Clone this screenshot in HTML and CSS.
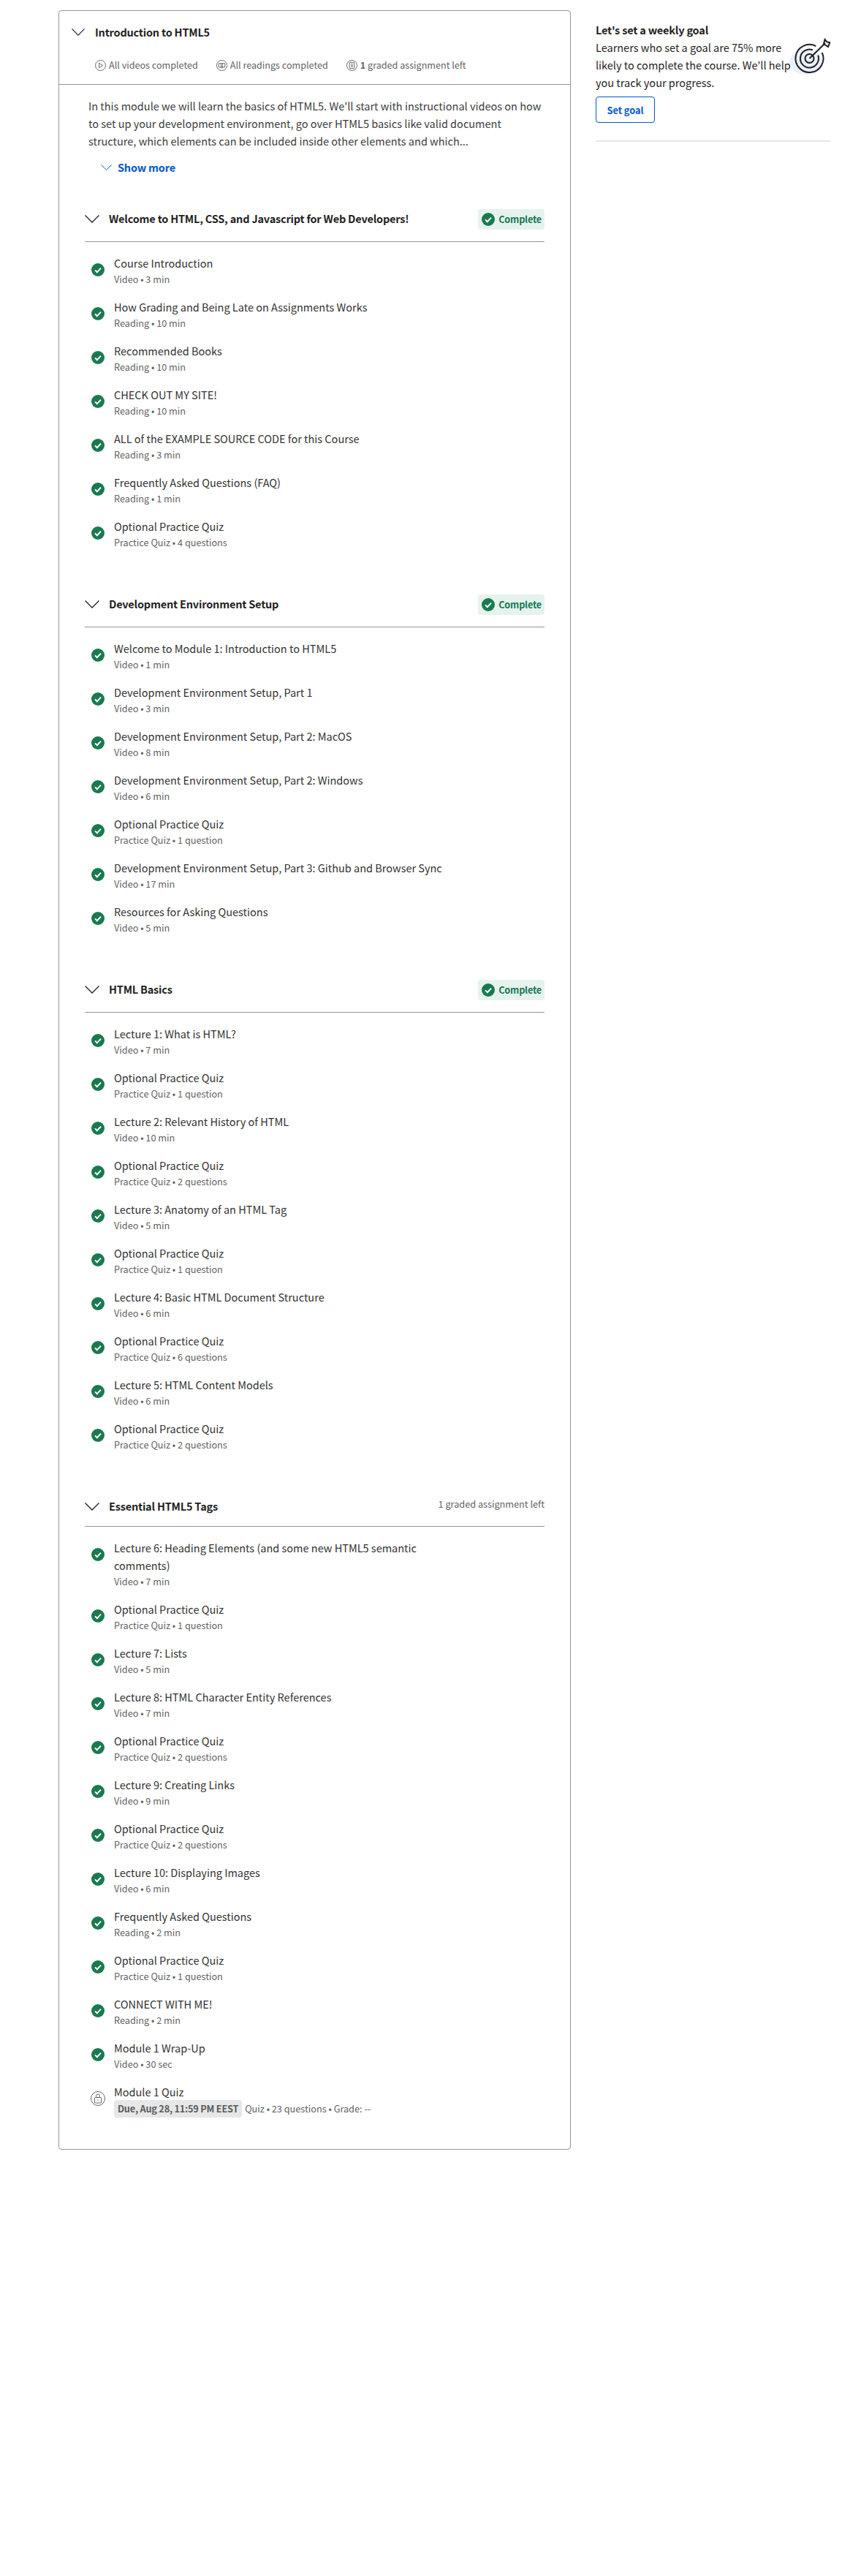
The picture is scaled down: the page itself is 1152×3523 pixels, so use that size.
FILE: index.html
```html
<!DOCTYPE html>
<html>
  <head>
    <title>Introduction to HTML5</title>
    <link rel="stylesheet" href="styles.css">
  </head>
  <body>
    <svg class="defs" width="0" height="0">
      <symbol id="done" viewBox="0 0 18 18">
        <circle cx="9" cy="9" r="9" fill="currentColor"/>
        <path d="M5 9.4l2.8 2.8L13 6.6" fill="none" stroke="#fff" stroke-width="2"/>
      </symbol>
      <symbol id="chevron" viewBox="0 0 20 11" preserveAspectRatio="none">
        <path d="M.5.5L10 10 19.5.5" fill="none" stroke="currentColor" stroke-width="1.3"/>
      </symbol>
    </svg>

    <div class="page">
      <main class="module">
        <header class="module-head">
          <div class="module-title">
            <svg class="chevron"><use href="#chevron"/></svg>
            <h1>Introduction to HTML5</h1>
          </div>
          <div class="stats">
            <span class="stat">
              <svg class="stat-icon" viewBox="0 0 16 16"><circle cx="8" cy="8" r="7.5"/><path d="M6 4.5v7l5.5-3.5z"/></svg>
              All videos completed
            </span>
            <span class="stat">
              <svg class="stat-icon" viewBox="0 0 16 16"><circle cx="8" cy="8" r="7.5"/><path d="M3.5 5h9v5.5h-9zM7 5v7M9 5v7"/></svg>
              All readings completed
            </span>
            <span class="stat">
              <svg class="stat-icon" viewBox="0 0 16 16"><circle cx="8" cy="8" r="7.5"/><path d="M4.5 3.5h7v9h-7zM6.5 6h3M6.5 8h3M6.5 10h3"/></svg>
              <span><b>1</b> graded assignment left</span>
            </span>
          </div>
        </header>

        <div class="summary">
          <p>In this module we will learn the basics of HTML5. We'll start with instructional videos on how to set up your development environment, go over HTML5 basics like valid document structure, which elements can be included inside other elements and which...</p>
          <button class="show-more">
            <svg class="chevron small"><use href="#chevron"/></svg>
            Show more
          </button>
        </div>

        <section class="lesson">
          <div class="lesson-head">
            <svg class="chevron"><use href="#chevron"/></svg>
            <h2>Welcome to HTML, CSS, and Javascript for Web Developers!</h2>
            <span class="badge"><svg class="check"><use href="#done"/></svg>Complete</span>
          </div>
          <ul class="items">
            <li class="item"><svg class="check"><use href="#done"/></svg><div><div class="item-title">Course Introduction</div><div class="item-meta">Video • 3 min</div></div></li>
            <li class="item"><svg class="check"><use href="#done"/></svg><div><div class="item-title">How Grading and Being Late on Assignments Works</div><div class="item-meta">Reading • 10 min</div></div></li>
            <li class="item"><svg class="check"><use href="#done"/></svg><div><div class="item-title">Recommended Books</div><div class="item-meta">Reading • 10 min</div></div></li>
            <li class="item"><svg class="check"><use href="#done"/></svg><div><div class="item-title">CHECK OUT MY SITE!</div><div class="item-meta">Reading • 10 min</div></div></li>
            <li class="item"><svg class="check"><use href="#done"/></svg><div><div class="item-title">ALL of the EXAMPLE SOURCE CODE for this Course</div><div class="item-meta">Reading • 3 min</div></div></li>
            <li class="item"><svg class="check"><use href="#done"/></svg><div><div class="item-title">Frequently Asked Questions (FAQ)</div><div class="item-meta">Reading • 1 min</div></div></li>
            <li class="item"><svg class="check"><use href="#done"/></svg><div><div class="item-title">Optional Practice Quiz</div><div class="item-meta">Practice Quiz • 4 questions</div></div></li>
          </ul>
        </section>

        <section class="lesson">
          <div class="lesson-head">
            <svg class="chevron"><use href="#chevron"/></svg>
            <h2>Development Environment Setup</h2>
            <span class="badge"><svg class="check"><use href="#done"/></svg>Complete</span>
          </div>
          <ul class="items">
            <li class="item"><svg class="check"><use href="#done"/></svg><div><div class="item-title">Welcome to Module 1: Introduction to HTML5</div><div class="item-meta">Video • 1 min</div></div></li>
            <li class="item"><svg class="check"><use href="#done"/></svg><div><div class="item-title">Development Environment Setup, Part 1</div><div class="item-meta">Video • 3 min</div></div></li>
            <li class="item"><svg class="check"><use href="#done"/></svg><div><div class="item-title">Development Environment Setup, Part 2: MacOS</div><div class="item-meta">Video • 8 min</div></div></li>
            <li class="item"><svg class="check"><use href="#done"/></svg><div><div class="item-title">Development Environment Setup, Part 2: Windows</div><div class="item-meta">Video • 6 min</div></div></li>
            <li class="item"><svg class="check"><use href="#done"/></svg><div><div class="item-title">Optional Practice Quiz</div><div class="item-meta">Practice Quiz • 1 question</div></div></li>
            <li class="item"><svg class="check"><use href="#done"/></svg><div><div class="item-title">Development Environment Setup, Part 3: Github and Browser Sync</div><div class="item-meta">Video • 17 min</div></div></li>
            <li class="item"><svg class="check"><use href="#done"/></svg><div><div class="item-title">Resources for Asking Questions</div><div class="item-meta">Video • 5 min</div></div></li>
          </ul>
        </section>

        <section class="lesson">
          <div class="lesson-head">
            <svg class="chevron"><use href="#chevron"/></svg>
            <h2>HTML Basics</h2>
            <span class="badge"><svg class="check"><use href="#done"/></svg>Complete</span>
          </div>
          <ul class="items">
            <li class="item"><svg class="check"><use href="#done"/></svg><div><div class="item-title">Lecture 1: What is HTML?</div><div class="item-meta">Video • 7 min</div></div></li>
            <li class="item"><svg class="check"><use href="#done"/></svg><div><div class="item-title">Optional Practice Quiz</div><div class="item-meta">Practice Quiz • 1 question</div></div></li>
            <li class="item"><svg class="check"><use href="#done"/></svg><div><div class="item-title">Lecture 2: Relevant History of HTML</div><div class="item-meta">Video • 10 min</div></div></li>
            <li class="item"><svg class="check"><use href="#done"/></svg><div><div class="item-title">Optional Practice Quiz</div><div class="item-meta">Practice Quiz • 2 questions</div></div></li>
            <li class="item"><svg class="check"><use href="#done"/></svg><div><div class="item-title">Lecture 3: Anatomy of an HTML Tag</div><div class="item-meta">Video • 5 min</div></div></li>
            <li class="item"><svg class="check"><use href="#done"/></svg><div><div class="item-title">Optional Practice Quiz</div><div class="item-meta">Practice Quiz • 1 question</div></div></li>
            <li class="item"><svg class="check"><use href="#done"/></svg><div><div class="item-title">Lecture 4: Basic HTML Document Structure</div><div class="item-meta">Video • 6 min</div></div></li>
            <li class="item"><svg class="check"><use href="#done"/></svg><div><div class="item-title">Optional Practice Quiz</div><div class="item-meta">Practice Quiz • 6 questions</div></div></li>
            <li class="item"><svg class="check"><use href="#done"/></svg><div><div class="item-title">Lecture 5: HTML Content Models</div><div class="item-meta">Video • 6 min</div></div></li>
            <li class="item"><svg class="check"><use href="#done"/></svg><div><div class="item-title">Optional Practice Quiz</div><div class="item-meta">Practice Quiz • 2 questions</div></div></li>
          </ul>
        </section>

        <section class="lesson">
          <div class="lesson-head">
            <svg class="chevron"><use href="#chevron"/></svg>
            <h2>Essential HTML5 Tags</h2>
            <span class="left-note">1 graded assignment left</span>
          </div>
          <ul class="items">
            <li class="item"><svg class="check"><use href="#done"/></svg><div><div class="item-title">Lecture 6: Heading Elements (and some new HTML5 semantic comments)</div><div class="item-meta">Video • 7 min</div></div></li>
            <li class="item"><svg class="check"><use href="#done"/></svg><div><div class="item-title">Optional Practice Quiz</div><div class="item-meta">Practice Quiz • 1 question</div></div></li>
            <li class="item"><svg class="check"><use href="#done"/></svg><div><div class="item-title">Lecture 7: Lists</div><div class="item-meta">Video • 5 min</div></div></li>
            <li class="item"><svg class="check"><use href="#done"/></svg><div><div class="item-title">Lecture 8: HTML Character Entity References</div><div class="item-meta">Video • 7 min</div></div></li>
            <li class="item"><svg class="check"><use href="#done"/></svg><div><div class="item-title">Optional Practice Quiz</div><div class="item-meta">Practice Quiz • 2 questions</div></div></li>
            <li class="item"><svg class="check"><use href="#done"/></svg><div><div class="item-title">Lecture 9: Creating Links</div><div class="item-meta">Video • 9 min</div></div></li>
            <li class="item"><svg class="check"><use href="#done"/></svg><div><div class="item-title">Optional Practice Quiz</div><div class="item-meta">Practice Quiz • 2 questions</div></div></li>
            <li class="item"><svg class="check"><use href="#done"/></svg><div><div class="item-title">Lecture 10: Displaying Images</div><div class="item-meta">Video • 6 min</div></div></li>
            <li class="item"><svg class="check"><use href="#done"/></svg><div><div class="item-title">Frequently Asked Questions</div><div class="item-meta">Reading • 2 min</div></div></li>
            <li class="item"><svg class="check"><use href="#done"/></svg><div><div class="item-title">Optional Practice Quiz</div><div class="item-meta">Practice Quiz • 1 question</div></div></li>
            <li class="item"><svg class="check"><use href="#done"/></svg><div><div class="item-title">CONNECT WITH ME!</div><div class="item-meta">Reading • 2 min</div></div></li>
            <li class="item"><svg class="check"><use href="#done"/></svg><div><div class="item-title">Module 1 Wrap-Up</div><div class="item-meta">Video • 30 sec</div></div></li>
            <li class="item">
              <svg class="lock" viewBox="0 0 20 20"><circle cx="10" cy="10" r="9.5"/><rect x="5.5" y="8.5" width="9" height="7.5" rx="1"/><path d="M7.5 8.5V6.5a2.5 2.5 0 0 1 5 0v2M10 11.5v1.5"/></svg>
              <div>
                <div class="item-title">Module 1 Quiz</div>
                <div class="item-meta quiz-meta"><span class="due">Due, Aug 28, 11:59 PM EEST</span>Quiz • 23 questions • Grade: --</div>
              </div>
            </li>
          </ul>
        </section>
      </main>

      <aside class="goal">
        <div class="goal-body">
          <div class="goal-text">
            <h3>Let's set a weekly goal</h3>
            <p>Learners who set a goal are 75% more likely to complete the course. We’ll help you track your progress.</p>
            <button class="goal-btn">Set goal</button>
          </div>
          <svg class="target" viewBox="0 0 56 52">
            <path class="target-blob" d="M1 34C0 24 8 16 20 16c12 0 25 4 26 18 0 10-10 16-23 16C11 50 2 44 1 34z"/>
            <path d="M44.7 20A19 19 0 1 1 36.4 11.2"/>
            <path d="M39.2 23.7A12.5 12.5 0 1 1 31.8 16.3"/>
            <circle cx="27.5" cy="28" r="6"/>
            <path d="M27.5 28L49 7M47 8l1.500-6 3 3.500 4 .5-2.500 6-6-4z"/>
          </svg>
        </div>
      </aside>
    </div>
  </body>
</html>
```

FILE: styles.css
```css
* {
  box-sizing: border-box;
}
body {
  font-family: "Noto Sans CJK JP", "Open Sans", sans-serif;
  margin: 0;
  height: 3523px;
  background: #fff;
  color: #1f1f1f;
  font-size: 14.5px;
  line-height: 24px;
}
h1, h2, h3, p, ul {
  margin: 0;
  padding: 0;
}
button {
  font-family: inherit;
  background: none;
  cursor: pointer;
}
.defs {
  position: absolute;
}
.page {
  display: flex;
  align-items: flex-start;
  padding: 14px 16px 0 80px;
  gap: 34px;
}

/* module card */
.module {
  width: 701px;
  flex: none;
  border: 1px solid #929599;
  border-radius: 4px;
  padding-bottom: 27px;
}
.module-head {
  padding: 17px 0 16px 17px;
  border-bottom: 1px solid #929599;
}
.module-title {
  display: flex;
  align-items: center;
  gap: 14px;
}
.chevron {
  width: 20px;
  height: 11px;
  flex: none;
  color: #1f1f1f;
}
.module-title .chevron {
  width: 18px;
  height: 10px;
}
.chevron.small {
  width: 15px;
  height: 8px;
  color: #0056d2;
}
h1, h2 {
  font-size: 14.5px;
  font-weight: 600;
  letter-spacing: -0.2px;
}
.stats {
  display: flex;
  gap: 25px;
  margin: 23px 0 0 32px;
  font-size: 12.6px;
  line-height: 20px;
  color: #636363;
}
.stat {
  display: flex;
  align-items: center;
  gap: 4px;
}
.stat b {
  font-weight: 600;
}
.stat-icon {
  width: 15px;
  height: 15px;
  fill: none;
  stroke: #636363;
  stroke-width: 1;
}
.summary {
  padding: 17px 36px 0 40px;
  color: #3d3d3d;
}
.show-more {
  display: flex;
  align-items: center;
  gap: 8px;
  margin: 12px 0 0 17px;
  padding: 0;
  border: none;
  font-size: 14.5px;
  line-height: 24px;
  font-weight: 600;
  letter-spacing: -0.2px;
  color: #0056d2;
}

/* lessons */
.lesson {
  margin: 45px 35px 0;
}
.lesson-head {
  display: flex;
  align-items: flex-start;
  padding-bottom: 15px;
  border-bottom: 1px solid #929599;
}
.lesson-head .chevron {
  margin-top: 8px;
}
.lesson-head h2 {
  flex: 1;
  margin: 1px 0 0 13px;
}
.badge {
  display: flex;
  align-items: center;
  gap: 5px;
  height: 28px;
  margin-bottom: 1px;
  padding: 0 4px 0 5px;
  border-radius: 4px;
  background: #e6f2ee;
  color: #137a52;
  font-size: 12.7px;
  font-weight: 600;
  letter-spacing: -0.2px;
}
.left-note {
  font-size: 12.7px;
  line-height: 20px;
  color: #636363;
}
.items {
  list-style: none;
  padding-top: 17px;
}
.item {
  display: flex;
  align-items: flex-start;
  gap: 13px;
  padding: 0 0 16px 9px;
}
.check {
  width: 18px;
  height: 18px;
  flex: none;
  color: #197a4f;
}
.item > .check {
  margin-top: 12px;
}
.lock {
  width: 20px;
  height: 20px;
  flex: none;
  margin: 11px -1px 0 -1px;
  fill: none;
  stroke: #636363;
  stroke-width: 1;
}
.item-title {
  max-width: 455px;
  color: #333;
}
.item-meta {
  font-size: 12.7px;
  line-height: 20px;
  color: #636363;
}
.quiz-meta {
  display: flex;
  align-items: center;
  gap: 4px;
  margin-top: -1px;
}
.due {
  padding: 2px 5px;
  border-radius: 4px;
  background: #e5e7e8;
  font-weight: 600;
  letter-spacing: -0.2px;
  color: #5b5b5b;
}

/* goal panel */
.goal {
  width: 321px;
  flex: none;
  padding: 15px 0 24px;
  border-bottom: 2px solid #e5e7e8;
}
.goal-body {
  display: flex;
}
.goal-text {
  width: 268px;
  flex: none;
}
.goal-text h3 {
  font-size: 14.5px;
  font-weight: 600;
  letter-spacing: -0.2px;
}
.goal-btn {
  display: block;
  width: 81px;
  height: 36px;
  margin-top: 7px;
  padding: 0;
  border: 1px solid #0056d2;
  border-radius: 4px;
  color: #0056d2;
  font-size: 12.7px;
  font-weight: 600;
}
.target {
  width: 56px;
  height: 52px;
  flex: none;
  margin: 23px 0 0 -3px;
  fill: none;
  stroke: #1f1f1f;
  stroke-width: 2;
}
.target-blob {
  fill: #e8f0fd;
  stroke: none;
}
```
